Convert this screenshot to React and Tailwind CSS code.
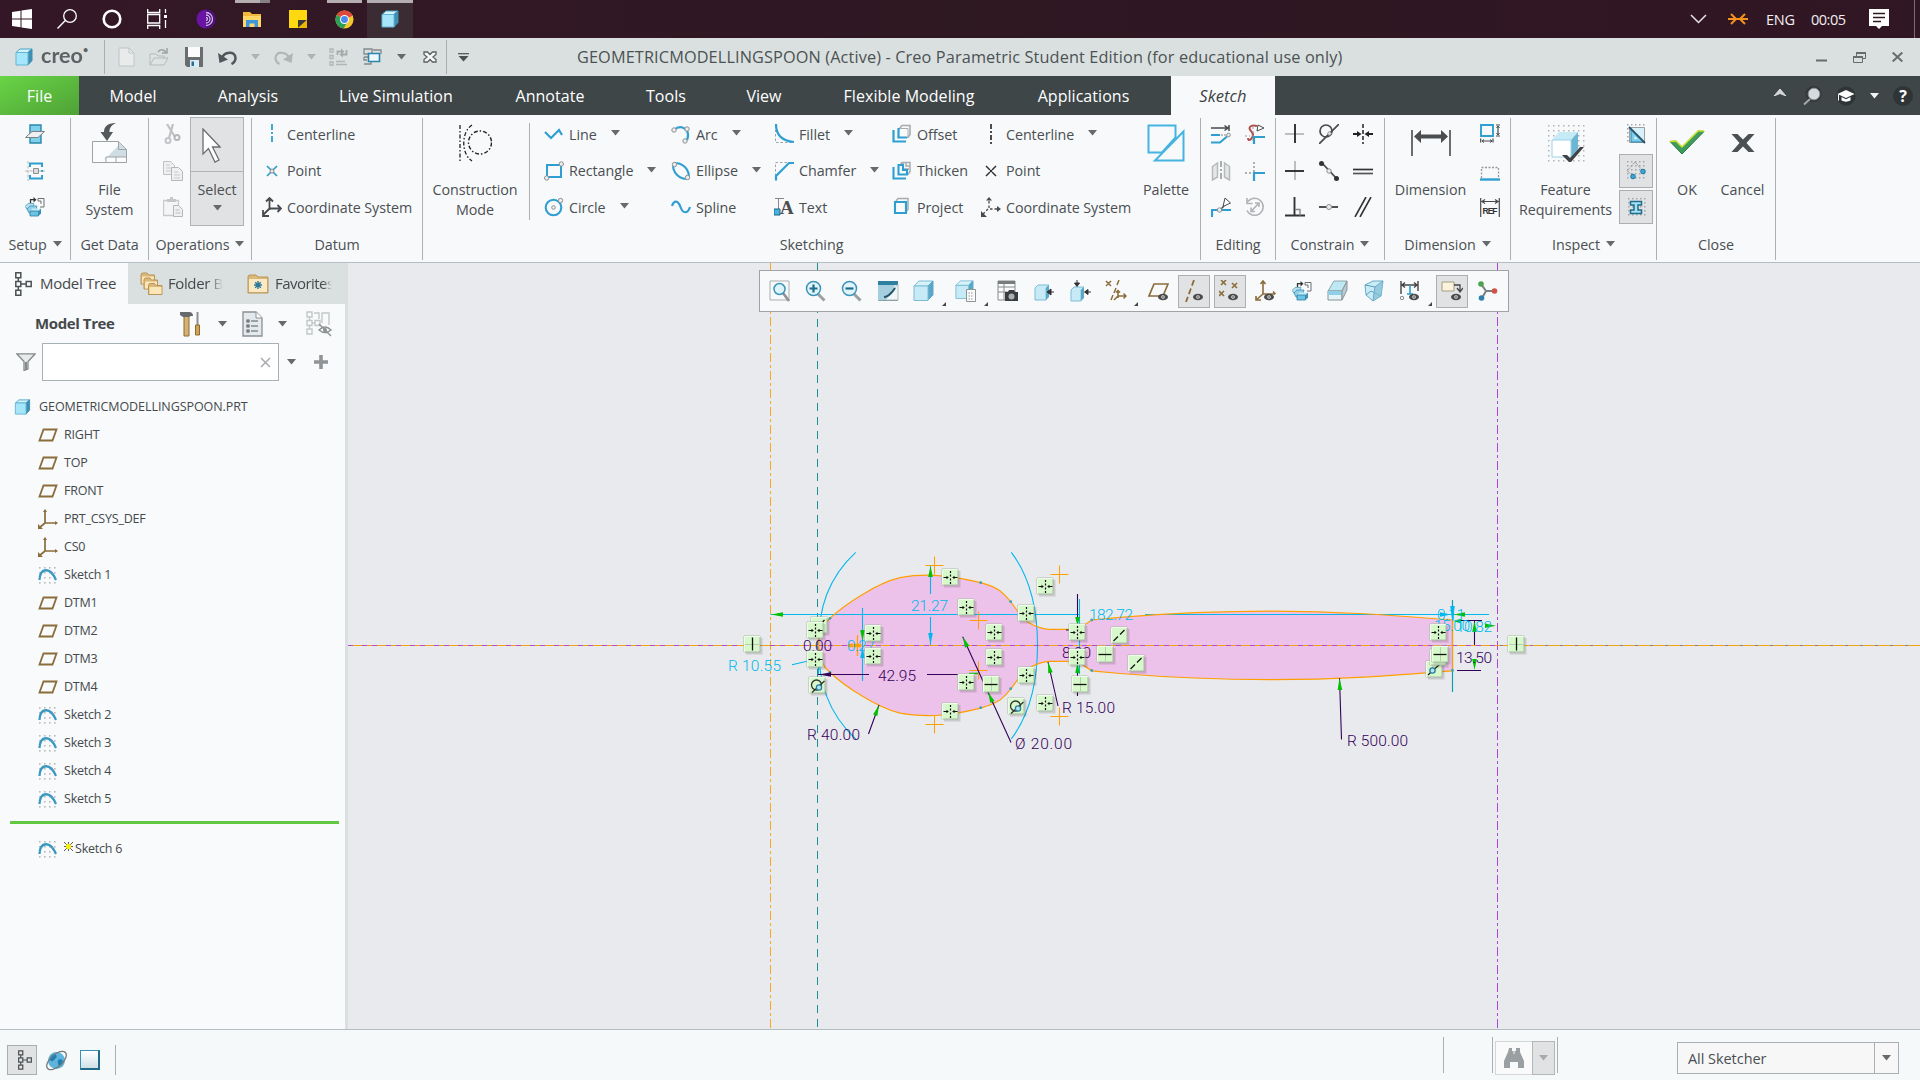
import React from "react";

const B = "#2e9fd0";
const D = "#474b4d";
const BR = "#8a6d3b";

/* ---------- shared primitives ---------- */

function Svg({ w = 20, h = 20, vb, className = "", children }) {
  return (
    <svg width={w} height={h} viewBox={vb || `0 0 ${w} ${h}`} fill="none" className={"block shrink-0 " + className}>
      {children}
    </svg>
  );
}

function Arrow({ className = "", color = "#666a6c" }) {
  return (
    <Svg w={9} h={6} className={className}>
      <path d="M0 0h9L4.5 5.5z" fill={color} />
    </Svg>
  );
}

function Cube({ w = 18, h = 18, className = "" }) {
  return (
    <Svg w={w} h={h} vb="0 0 18 18" className={className}>
      <path d="M1 4.5L5 1h12l-4 3.500z" fill="#d5f3fb" stroke="#4aa3c4" />
      <path d="M13 4.500L17 1v11.500L13 17z" fill="#3f8fb4" stroke="#3c8db0" />
      <path d="M1 4.500h12V17H1z" fill="#a6e6fa" stroke="#62b5d3" />
    </Svg>
  );
}

const Dots = ({ n = 5, s = 4, x = 1, y = 1, c = "#a3a7a9", r = 1.5 }) => (
  <g fill={c}>
    {Array.from({ length: n * n }, (_, i) => (
      <rect key={i} x={x + (i % n) * s} y={y + Math.floor(i / n) * s} width={r} height={r} />
    ))}
  </g>
);

const Knob = ({ x, y, r = 2.2 }) => <circle cx={x} cy={y} r={r} fill="#eee" stroke="#8b8f91" />;

const Eye = ({ x = 14, y = 15 }) => (
  <g>
    <ellipse cx={x} cy={y} rx="5" ry="3.300" fill="#4a4a4a" />
    <circle cx={x} cy={y} r="1.800" fill="#e8e8e8" />
    <circle cx={x} cy={y} r="0.800" fill="#222" />
  </g>
);

/* ---------- taskbar ---------- */

function TaskSlot({ children, className = "", line }) {
  return (
    <div className={"flex h-[38px] w-[46px] flex-col items-center " + className}>
      <div className={"h-[3px] " + (line || "w-0")} />
      <div className="flex h-[32px] items-center">{children}</div>
    </div>
  );
}

function Taskbar() {
  return (
    <div className="flex h-[38px] w-full items-center bg-linear-to-r from-[#341726] via-[#2e1822] to-[#311623] text-[#f3eef0]">
      <div className="flex w-[183px]">
        <div className="flex w-[44px] justify-center">
          <Svg>
            <path d="M0 3l8.500-1.200V9.500H0zM9.500 1.600L20 0v9.500H9.500zM0 10.500h8.500v7.700L0 17zM9.500 10.500H20V20L9.500 18.400z" fill="#fff" />
          </Svg>
        </div>
        <div className="flex w-[45px] justify-center">
          <Svg>
            <circle cx="13" cy="7" r="6.300" stroke="#fff" strokeWidth="1.300" />
            <path d="M8.300 11.500L0.500 19.500" stroke="#fff" strokeWidth="1.400" />
          </Svg>
        </div>
        <div className="flex w-[45px] justify-center">
          <Svg>
            <circle cx="10" cy="10" r="8.300" stroke="#fff" strokeWidth="2.600" />
          </Svg>
        </div>
        <div className="flex w-[45px] justify-center">
          <Svg>
            <path d="M.7 0v3.500h12V0M.7 20v-3.500h12V20M.7 5.500h12v8.500H.7zM18.500 0v4M18.500 11v8" stroke="#fff" strokeWidth="1.300" />
            <path d="M17 6h3v3h-3z" fill="#fff" />
          </Svg>
        </div>
      </div>
      <TaskSlot>
        <Svg>
          <circle cx="10" cy="10" r="9.500" fill="#6a14a5" />
          <path d="M10 1a9 9 0 010 18z" fill="#4b0d7a" />
          <path d="M10 3.500a6.500 6.500 0 010 13M10 6a4 4 0 010 8M10 8.500a1.500 1.500 0 010 3" stroke="#d9bdf0" strokeWidth="1.300" />
        </Svg>
      </TaskSlot>
      <TaskSlot line="w-[35px] border-r-[10px] border-[#868082] bg-[#b5aeb1]">
        <Svg w={18} h={17}>
          <path d="M0 1h7l2 2h9v13H0z" fill="#f0b73b" />
          <path d="M0 5h18v11H0z" fill="#ffd768" />
          <path d="M3 16V9h12v7h-3.500v-3.500h-5V16z" fill="#3c97dc" />
        </Svg>
      </TaskSlot>
      <TaskSlot>
        <Svg w={18} h={18}>
          <path d="M0 0h18v18H0z" fill="#ffd90f" />
          <path d="M9 18v-8h9z" fill="#3a3a3a" />
          <path d="M9 18l9-8v8z" fill="#eeb509" />
        </Svg>
      </TaskSlot>
      <TaskSlot line="w-[35px] bg-[#b5aeb1]">
        <Svg w={19} h={19} vb="0 0 20 20">
          <circle cx="10" cy="10" r="9.500" fill="#f6c62d" />
          <path d="M10 10L1.800 5.200A9.500 9.500 0 0118.500 6z" fill="#dc4a3d" />
          <path d="M10 10L1.800 5.200a9.500 9.500 0 007.200 14.300l3.500-6z" fill="#2f9e57" />
          <circle cx="10" cy="10" r="4.700" fill="#fff" />
          <circle cx="10" cy="10" r="3.600" fill="#4a87ee" />
        </Svg>
      </TaskSlot>
      <TaskSlot className="bg-[#3a2c32]" line="w-[46px] bg-[#b5aeb1]">
        <Cube />
      </TaskSlot>
      <div className="flex-1" />
      <Svg w={17} h={10}>
        <path d="M1 1l7.500 7.500L16 1" stroke="#e8e4e6" strokeWidth="1.500" />
      </Svg>
      <Svg w={20} h={14} className="ml-[21px]">
        <path d="M0 7h7M3 2l5 5-5 5M20 7h-7M17 2l-5 5 5 5M8 7h4" stroke="#f4921e" strokeWidth="2" />
      </Svg>
      <span className="ml-[18px] w-[45px] pt-px text-[14.500px] tracking-[-0.2px]">ENG</span>
      <span className="w-[58px] pt-px text-[14.500px] tracking-[-0.5px]">00:05</span>
      <Svg w={20} h={20}>
        <path d="M0 0h20v17h-7l-3 3-3-3H0z" fill="#fff" />
        <path d="M4 4.500h12M4 8.500h12M4 12.500h8" stroke="#2e1822" strokeWidth="1.300" />
      </Svg>
      <div className="ml-[25px] h-[38px] w-[6px] border-l border-[#7a6a72]" />
    </div>
  );
}

/* ---------- title bar ---------- */

function TitleBar() {
  return (
    <div className="flex h-[38px] w-full items-center bg-[#dae0df] text-[#4b5254]">
      <Cube className="ml-[15px]" />
      <div className="ml-2 flex w-[63px] pb-[3px] font-['Lato'] text-[20.500px] leading-none font-bold text-[#5d6265]">
        <span className="inline-block origin-left scale-x-[1.05]">creo</span>
        <span className="ml-[2px] text-[9px]">•</span>
      </div>
      <div className="h-[34px] w-px bg-[#a9afb0]" />
      <div className="flex w-[341px] items-center">
        <Svg w={17} h={20} className="ml-[13px]">
          <path d="M1 1h10l5 5v13H1z" fill="#e9ebeb" stroke="#bfc4c5" />
          <path d="M11 1v5h5" stroke="#bfc4c5" />
        </Svg>
        <Svg w={20} h={20} className="ml-[14px]">
          <path d="M1 18V7h6l2 2h6v3M1 18l4-7h14l-4 7z" fill="#dfe2e2" stroke="#b5babb" />
          <path d="M9 5c2-3 5-3 8 0M18 1v5h-5" stroke="#9ca2a3" strokeWidth="1.500" />
        </Svg>
        <Svg w={18} h={20} className="ml-[16px]">
          <path d="M0 0h18v20H2l-2-2z" fill="#696d70" />
          <path d="M3 0h12v10H3z" fill="#fbfbfb" />
          <path d="M5 13h9v7H5z" fill="#d9ecf5" />
          <path d="M6.500 14.500h2.500v4.500H6.500z" fill="#2b6d8e" />
        </Svg>
        <Svg w={19} h={15} className="ml-[15px]">
          <path d="M4 8c2-6 13-8 13.500 0 0 3-2 5-4 6" stroke="#51565a" strokeWidth="2.500" />
          <path d="M0 3l1.500 10L10 9.500z" fill="#51565a" />
        </Svg>
        <Arrow className="ml-[14px]" color="#adb3b3" />
        <Svg w={19} h={15} className="ml-[14px]">
          <path d="M15 8C13 2 2 0 1.500 8c0 3 2 5 4 6" stroke="#b0b6b6" strokeWidth="2.200" />
          <path d="M19 3l-1.500 10L9 9.500z" fill="#b0b6b6" />
        </Svg>
        <Arrow className="ml-[14px]" color="#adb3b3" />
        <Svg w={19} h={20} className="ml-[13px]">
          <path d="M1 2h3v3H1zM1 8.500h3v3H1zM1 15h3v3H1zM7 14.500h9M7 17.500h11" stroke="#b0b5b6" strokeWidth="1.300" />
          <path d="M8.500 8V4.500h4M17.500 3v4.500h-4" stroke="#a5abab" strokeWidth="1.800" />
          <path d="M12 1.500l3.500 3-3.500 3zM14 4.500v6l-3.500-3z" fill="#a5abab" />
        </Svg>
        <Svg w={19} h={18} className="ml-[15px]">
          <path d="M1 1h8v5H1zM10 2h8v4M1 9h4M1 16h7v-3M1 9v3h3" stroke="#84898b" strokeWidth="1.300" />
          <path d="M5.500 5.500h11v8h-11z" fill="#eef7fb" stroke="#2b86ab" strokeWidth="1.600" />
        </Svg>
        <Arrow className="ml-[15px]" />
        <Svg w={14} h={12} className="ml-[17px]">
          <path d="M1 1h3.500L7 3.500 9.500 1H13v2.500L10 6l3 2.500V11H9.500L7 8.500 4.500 11H1V8.500L4 6 1 3.500z" fill="#f7f8f8" stroke="#5b6062" strokeWidth="1.300" />
        </Svg>
      </div>
      <div className="h-[34px] w-px bg-[#a9afb0]" />
      <Svg w={11} h={9} className="ml-[11px]">
        <path d="M0 .7h11" stroke="#4b5053" strokeWidth="1.200" />
        <path d="M.5 3h10L5.500 8.500z" fill="#4b5053" />
      </Svg>
      <span className="ml-[108px] w-[780px] text-[16.300px] tracking-[0.120px] whitespace-nowrap">
        GEOMETRICMODELLINGSPOON (Active) - Creo Parametric Student Edition (for educational use only)
      </span>
      <div className="flex-1" />
      <Svg w={11} h={10}>
        <path d="M0 8.500h11" stroke="#666c6e" strokeWidth="2" />
      </Svg>
      <Svg w={13} h={11} className="ml-[26px]">
        <path d="M.5 4.500h9v6h-9zM3.500 4V.5h9v6H10" stroke="#666c6e" />
        <path d="M0 5h10M3 1h10" stroke="#666c6e" strokeWidth="2" />
      </Svg>
      <Svg w={11} h={10} className="mr-[17px] ml-[26px]">
        <path d="M.7.5l9.600 9M10.300.5l-9.600 9" stroke="#666c6e" strokeWidth="2" />
      </Svg>
    </div>
  );
}

/* ---------- ribbon tabs ---------- */

const TABS = [
  ["Model", "w-[108px]"],
  ["Analysis", "w-[122px]"],
  ["Live Simulation", "w-[174px]"],
  ["Annotate", "w-[134px]"],
  ["Tools", "w-[98px]"],
  ["View", "w-[98px]"],
  ["Flexible Modeling", "w-[192px]"],
  ["Applications", "w-[157px]"],
];

function Tabs() {
  return (
    <div className="flex h-[39px] w-full items-center bg-[#3e4647] text-[16px] tracking-[0.050px] text-white">
      <div className="flex h-full w-[79px] items-center justify-center bg-linear-to-br from-[#68d546] to-[#4fa236]">File</div>
      {TABS.map(([t, w]) => (
        <div key={t} className={"text-center whitespace-nowrap " + w}>
          {t}
        </div>
      ))}
      <div className="ml-[9px] flex h-full w-[104px] items-center justify-center bg-[#f8f9fb] pt-px text-[16.500px] text-[#3c4244] italic">Sketch</div>
      <div className="flex-1" />
      <Svg w={14} h={8} className="mb-2">
        <path d="M1 8l6-7 6 7-6-2.500z" fill="#d5d8d8" stroke="#d5d8d8" />
      </Svg>
      <Svg w={19} h={20} className="ml-[16px]">
        <circle cx="10.500" cy="8" r="8" fill="#33393a" />
        <circle cx="11" cy="8" r="5.800" fill="#d3dbdf" stroke="#8d9597" />
        <path d="M7 13l-6 5.500" stroke="#a5abab" strokeWidth="1.800" />
      </Svg>
      <Svg w={20} h={20} className="ml-[14px]">
        <circle cx="10" cy="10" r="9.500" fill="#2f3536" />
        <path d="M1.500 8l8.500-4 8.500 4-8.500 4z" fill="#fff" />
        <path d="M5.500 11v3.500c3 1.500 6 1.500 9 0V11L10 13.200z" fill="#fff" />
        <path d="M2.500 8.500v6" stroke="#fff" />
      </Svg>
      <Arrow className="ml-[14px]" color="#f2f4f4" />
      <div className="mr-[7px] ml-[14px] flex h-5 w-5 items-center justify-center rounded-full bg-[#2f3536] text-[16px] font-bold">?</div>
    </div>
  );
}

/* ---------- ribbon ---------- */

function Group({ w, label, arrow, children }) {
  return (
    <div className={"flex h-full flex-col " + w}>
      <div className="mt-[3px] flex h-[142px] flex-col border-r border-[#abb0b2]">
        <div className="flex h-[111px]">{children}</div>
        <div className="flex h-[31px] items-center justify-center pt-px">
          {label}
          {arrow && <Arrow className="mb-[3px] ml-[6px]" />}
        </div>
      </div>
    </div>
  );
}

function Col({ className = "", children }) {
  return (
    <div className={"-mt-[2px] flex flex-col " + className}>
      {React.Children.map(children, (c) => (
        <div className="flex h-[36.500px] items-center">{c}</div>
      ))}
    </div>
  );
}

function Item({ icon, label, arrow }) {
  return (
    <div className="flex items-center whitespace-nowrap">
      {icon}
      <span className="ml-[5px]">{label}</span>
      {arrow && <Arrow className="mb-[2px] ml-[14px]" />}
    </div>
  );
}

function Big({ icon, label, label2, className = "" }) {
  return (
    <div className={"flex flex-col items-center " + className}>
      <div className="flex h-[54px] items-center pb-[4px]">{icon}</div>
      <div className="mt-[8px] leading-[20px] whitespace-nowrap">{label}</div>
      {label2 && <div className="leading-[20px] whitespace-nowrap">{label2}</div>}
    </div>
  );
}

const ic = {
  setup1: (
    <Svg>
      <path d="M5 1h11v18H5z" fill="#7fd0ea" stroke="#2b86ab" strokeWidth="1.400" />
      <path d="M7 7.500h12.500L13 13.500H.5z" fill="#eef0f1" stroke="#7c8183" />
    </Svg>
  ),
  setup2: (
    <Svg>
      <path d="M5 6V2.500h12V6M5 14v3.500h12V14M17 9v2" stroke={B} strokeWidth="2" />
      <path d="M0 10h20M3 0v20" stroke="#b4b8b9" strokeDasharray="3 1.500" />
      <path d="M8.500 7.500h5v5h-5z" fill="#ddd" stroke="#8b8f91" />
    </Svg>
  ),
  setup3: (
    <Svg>
      <path d="M0 9.500l3-3h6l-2 7H3z" fill="#b5dfef" stroke="#5b9fbd" strokeWidth="0.800" />
      <path d="M2 12l3-3h7l-2 7H4z" fill="#8fd0e8" stroke="#3f8fb2" strokeWidth="0.800" />
      <path d="M5 14l2.500-2.500H16L13.500 14z" fill="#c3ebf7" />
      <path d="M13.500 14l2.500-2.500v5L13.500 19z" fill="#3f8fb2" />
      <path d="M5 14h8.500v5H5z" fill="#6cc3e3" stroke="#2b7ea3" strokeWidth="0.800" />
      <path d="M5.500 6V2.700H10" stroke="#333" strokeWidth="1.300" />
      <path d="M8.500 0l3 2.700-3 2.700z" fill="#333" />
      <path d="M13 1.500h6v8.500h-4M13 1.500V4h3v3" stroke="#6b6f72" />
    </Svg>
  ),
  file: (
    <Svg w={35} h={40}>
      <path d="M.5 18.500h26l8 8v13H.5z" fill="#fbfcfd" stroke="#9ea3a5" />
      <path d="M10 39L27 22v-3l7 8v7H14z" fill="#cfdde5" />
      <path d="M26.500 18.500v8h8M14 39v-5h20M24 34v5" stroke="#9ea3a5" />
      <path d="M24 0C15 0 12 4 12 9H8.500l6.500 9 6-9h-3.500c0-4 1-6 6.500-9z" fill="#53585a" />
    </Svg>
  ),
  cut: (
    <Svg w={18} h={20}>
      <path d="M4 0l8 13M10 0l-4 14" stroke="#bfc2c4" strokeWidth="2.200" />
      <circle cx="5" cy="16.500" r="2.500" stroke="#c2c5c7" strokeWidth="2" />
      <circle cx="14" cy="13.500" r="2.500" stroke="#b5b8ba" strokeWidth="2" />
    </Svg>
  ),
  copy: (
    <Svg>
      <path d="M.5.5h7l4 4v9H.5z" fill="#eff0f1" stroke="#bfc2c4" />
      <path d="M8.500 6.500h7l4 4v9h-11z" fill="#eff0f1" stroke="#b5b8ba" />
      <path d="M3 4h4M3 7h5M3 10h5M11 11h4M11 14h6M11 17h6" stroke="#c7cacb" />
    </Svg>
  ),
  paste: (
    <Svg>
      <path d="M.5 3.500h15v15H.5z" fill="#f4f5f6" stroke="#c7cacb" strokeWidth="1.300" />
      <path d="M4 2h3V0h3v2h3v3H4z" fill="#c5c8ca" />
      <path d="M10.500 8.500h5l4 4v7h-9z" fill="#eff0f1" stroke="#b5b8ba" />
      <path d="M12.500 13h4M12.500 16h5" stroke="#bbb" />
    </Svg>
  ),
  cursor: (
    <Svg w={19} h={36}>
      <path d="M1 1v25l5.500-5.500L13 34l4-2-6.500-13H18z" fill="#fff" stroke="#6a6e70" strokeWidth="1.300" />
    </Svg>
  ),
  clBlue: (
    <Svg>
      <path d="M10 0v20" stroke={B} strokeWidth="1.800" strokeDasharray="6 2 2 2" />
    </Svg>
  ),
  ptBlue: (
    <Svg>
      <path d="M5 5l10 10M15 5L5 15" stroke={B} strokeWidth="1.700" />
      <circle cx="10" cy="10" r="2" fill="#e8e8e8" stroke="#888" />
    </Svg>
  ),
  csDark: (
    <Svg>
      <path d="M7.500 13V2M4 4.500L7.500 1 11 4.500M7.500 11.500H18M15.500 8l3.500 3.500-3.500 3.500M7.500 11.500l-6 6M1 13v6h6" stroke={D} strokeWidth="1.800" />
    </Svg>
  ),
  constr: (
    <Svg w={34} h={38}>
      <path d="M2 1v36" stroke="#222" strokeWidth="1.300" strokeDasharray="4 2 1.500 2" />
      <path d="M14 1C3 8 3 30 14 37" stroke="#222" strokeWidth="1.300" strokeDasharray="4 2 1.500 2" />
      <circle cx="22" cy="18.500" r="11.500" stroke="#222" strokeWidth="1.400" strokeDasharray="4 2 1.500 2" />
    </Svg>
  ),
  line: (
    <Svg>
      <path d="M1 8l6 6 8-8 3 5" stroke={B} strokeWidth="2.200" />
    </Svg>
  ),
  rect: (
    <Svg>
      <path d="M3 4h14v12H3z" stroke={B} strokeWidth="2" />
      <Knob x={17.300} y={3} />
      <Knob x={2.700} y={17} />
    </Svg>
  ),
  circle: (
    <Svg>
      <circle cx="9.500" cy="10.500" r="7.800" stroke={B} strokeWidth="2.100" />
      <Knob x={9.500} y={10.500} r={1.800} />
      <Knob x={16.500} y={3.500} />
    </Svg>
  ),
  arc: (
    <Svg>
      <path d="M3 6C10 0 20 5 16 16" stroke={B} strokeWidth="2.200" />
      <Knob x={3} y={6} />
      <Knob x={16} y={5} />
      <Knob x={14} y={17} />
    </Svg>
  ),
  ellipse: (
    <Svg>
      <ellipse cx="10" cy="10" rx="9.500" ry="5.500" transform="rotate(45 10 10)" stroke={B} strokeWidth="2.100" />
      <Knob x={3.500} y={3.500} />
      <Knob x={16.500} y={16.500} />
    </Svg>
  ),
  spline: (
    <Svg>
      <path d="M1 9c2-6 6-6 8.500 1s7 7 9.500 0" stroke={B} strokeWidth="2.200" />
    </Svg>
  ),
  fillet: (
    <Svg>
      <path d="M1.500 1v17.500H19" stroke="#a0a4a6" strokeDasharray="2.500 2" />
      <path d="M2 0c0 11 6 17 18 18" stroke={B} strokeWidth="2.200" />
    </Svg>
  ),
  chamfer: (
    <Svg>
      <path d="M1.500 15V1.500H15" stroke="#a0a4a6" strokeDasharray="2.500 2" />
      <path d="M2 19.500V15L15 2h5" stroke={B} strokeWidth="2.200" />
    </Svg>
  ),
  text: (
    <Svg>
      <path d="M1 1.500h9M4.500 1v12" stroke="#85898b" />
      <path d="M0 12h6v6H0z" fill="#45b4e0" stroke="#1c6584" />
      <text x="6" y="16.500" fontFamily="Liberation Serif, serif" fontWeight="bold" fontSize="19" fill="#4b4f51">A</text>
    </Svg>
  ),
  offset: (
    <Svg>
      <path d="M7.500 4.500L10 1.500h8v9l-2 3" stroke="#a8acae" strokeWidth="1.600" />
      <path d="M7 4.500h9v9H6z" stroke="#a8acae" />
      <path d="M1.500 6v11.500H14M6.500 4v9.500H15" stroke={B} strokeWidth="2.200" />
    </Svg>
  ),
  thicken: (
    <Svg>
      <path d="M7.500 4.500L10 1.500h8v9l-2 3M11 2v6h6M14 2v3h4" stroke="#a8acae" strokeWidth="1.500" />
      <path d="M1.500 6v11.500H14M6.500 4v9.500H15V9h-4V4z" stroke={B} strokeWidth="2.100" />
    </Svg>
  ),
  project: (
    <Svg>
      <path d="M4 4l2-2.500h10V12l-2 3" stroke="#a8acae" strokeWidth="1.500" />
      <path d="M3 5h11v11H3z" stroke={B} strokeWidth="2.100" />
    </Svg>
  ),
  clDark: (
    <Svg>
      <path d="M10 0v20" stroke="#222" strokeWidth="1.600" strokeDasharray="5 2 2 2" />
    </Svg>
  ),
  ptDark: (
    <Svg>
      <path d="M5 5l4 4M11 11l4 4M15 5l-4 4M9 11l-4 4" stroke="#333" strokeWidth="1.500" />
      <path d="M9 9h2v2H9z" fill="#333" />
    </Svg>
  ),
  csDash: (
    <Svg>
      <path d="M8 4v8h9M7 12l-5 5" stroke={D} strokeWidth="1.300" strokeDasharray="2.500 2" />
      <path d="M5 3.500L8 0l3 3.500zM16 9l4 3-4 3zM0 14v6h6z" fill={D} />
    </Svg>
  ),
  palette: (
    <Svg w={38} h={38}>
      <path d="M1.500 1.500h27v12L15 28.500H1.500z" stroke="#45b4e0" strokeWidth="2" />
      <path d="M36.500 7.500v29H8z" fill="#f8f9fb" stroke="#45b4e0" strokeWidth="2" />
    </Svg>
  ),
  modify: (
    <Svg>
      <path d="M0 4h17M18 1v6M13.500 1.500L17 4l-3.500 2.500" stroke={D} strokeWidth="1.500" />
      <path d="M0 11h9M0 18.500h9l7-6" stroke={B} strokeWidth="2" />
      <path d="M10 11h6" stroke="#888" strokeDasharray="2 1" />
      <Knob x={17.500} y={11} r={1.800} />
    </Svg>
  ),
  delseg: (
    <Svg>
      <path d="M12 2C5 0 3 4 6 7s2 6 0 8-3 1-3-1" stroke="#b0544b" strokeWidth="2" />
      <path d="M0 12h5M8 3v14" stroke="#999" strokeDasharray="2 2" />
      <path d="M9 20v-7h11" stroke={B} strokeWidth="2.200" />
      <path d="M13 1l6 3-7 3z" fill="#fff" stroke={D} />
    </Svg>
  ),
  mirror: (
    <Svg>
      <path d="M10 0v20" stroke="#8f9395" strokeWidth="1.500" strokeDasharray="6 2 2 2" />
      <path d="M1.500 5.500l5-3.500v14l-5 3zM18.500 5.500l-5-3.500v14l5 3z" fill="#e4e6e7" stroke="#b7babc" strokeWidth="1.500" />
    </Svg>
  ),
  corner: (
    <Svg>
      <path d="M9 1v10M0 12h8" stroke="#999" strokeWidth="1.500" strokeDasharray="2 2" />
      <path d="M9 20v-8h11" stroke={B} strokeWidth="2.200" />
    </Svg>
  ),
  divide: (
    <Svg>
      <path d="M1 20v-7h6M11 13h9" stroke={B} strokeWidth="2.200" />
      <path d="M12 9.500L14 1l5.500 5z" fill="#fff" stroke={D} />
      <path d="M13 9l-3 3" stroke={D} strokeWidth="1.500" />
      <Knob x={8.500} y={13} />
    </Svg>
  ),
  rotate: (
    <Svg>
      <path d="M3 4.500a8.500 8.500 0 11-1 9M2 1v5.500h5.500M6.500 14l7-7.500M10 6h4v4M6 10.500v4h4" stroke="#b0b3b5" strokeWidth="1.600" />
    </Svg>
  ),
  c1: <Svg><path d="M0 10h19" stroke="#a7abad" strokeWidth="1.500" /><path d="M10 0v19" stroke="#222" strokeWidth="1.800" /></Svg>,
  c2: <Svg><circle cx="7" cy="7" r="6" stroke={D} strokeWidth="1.700" /><path d="M0 20L20 0" stroke={D} strokeWidth="1.700" /><Knob x={10.500} y={9.500} r={1.700} /></Svg>,
  c3: (
    <Svg>
      <path d="M10 0v20" stroke="#222" strokeWidth="1.500" strokeDasharray="4 2" />
      <path d="M0 10h5M20 10h-5" stroke="#222" strokeWidth="1.800" />
      <path d="M4 7l4.500 3L4 13zM16 7l-4.500 3 4.500 3z" fill="#222" />
    </Svg>
  ),
  c4: <Svg><path d="M10 0v19" stroke="#a7abad" strokeWidth="1.500" /><path d="M0 10h19" stroke="#222" strokeWidth="1.800" /></Svg>,
  c5: (
    <Svg>
      <path d="M3 2l15 16" stroke={D} strokeWidth="1.800" />
      <circle cx="2.500" cy="2.500" r="2.500" fill="#333" />
      <circle cx="17.500" cy="17.500" r="2.500" fill="#333" />
      <Knob x={10} y={10} />
    </Svg>
  ),
  c6: <Svg><path d="M0 8.500h20" stroke="#333" strokeWidth="1.700" /><path d="M0 12.500h20" stroke="#555" strokeWidth="1.700" /></Svg>,
  c7: <Svg><path d="M9.500 0v18M0 18.500h20" stroke="#333" strokeWidth="1.900" /><path d="M10 12.500h5v6" stroke="#888" strokeWidth="1.400" /></Svg>,
  c8: <Svg><path d="M0 10h19" stroke="#333" strokeWidth="1.700" /><Knob x={10} y={10} r={2.500} /></Svg>,
  c9: <Svg><path d="M2 20L13 0M7 20L18 0" stroke="#333" strokeWidth="1.600" /></Svg>,
  dim: (
    <Svg w={40} h={26}>
      <path d="M1 0v26M39 0v26" stroke="#333" strokeWidth="1.400" />
      <path d="M8 6.500h24" stroke="#4a4e50" strokeWidth="4" />
      <path d="M3 6.500L10 0v13zM37 6.500L30 0v13z" fill="#4a4e50" />
    </Svg>
  ),
  dim1: (
    <Svg>
      <path d="M1 1h12v11H1z" stroke={B} strokeWidth="1.900" />
      <path d="M16 1h4M16 12h4M18 2v9M.7 14.500v4M13 14.500v4M2 17h10" stroke={D} strokeWidth="1.200" />
      <path d="M16.500 4L18 2l1.500 2M16.500 9l1.500 2 1.500-2M4 15.500L2 17l2 1.500M10 15.500l2 1.500-2 1.500" stroke={D} />
    </Svg>
  ),
  dim2: (
    <Svg>
      <path d="M1.500 17V6.500h17V17" stroke="#999" strokeWidth="1.300" strokeDasharray="2 1.500" />
      <path d="M0 18.500h20" stroke={B} strokeWidth="2.400" />
    </Svg>
  ),
  dim3: (
    <Svg>
      <path d="M.7 1v19M19.300 1v19M2 4.500h16M5 2.500L2 4.500l3 2M15 2.500l3 2-3 2" stroke={D} strokeWidth="1.200" />
      <text x="2.500" y="17" fontFamily="Liberation Sans, sans-serif" fontWeight="bold" fontSize="8.500" textLength="15" fill="#333">REF</text>
    </Svg>
  ),
  feature: (
    <Svg w={38} h={38}>
      <Dots n={8} s={5} x={1} y={1} c="#b0b4b6" />
      <path d="M5 16l7-8h19l-7 8z" fill="#c5ebf7" />
      <path d="M24 16l7-8v17l-7 8z" fill="#6cb6d4" />
      <path d="M5 16h19v17H5z" fill="#fff" stroke="#9bd2e6" />
      <path d="M15 31h5l3 3L33 23h4L24 38h-2z" fill="#404446" />
    </Svg>
  ),
  in1: (
    <Svg>
      <Dots n={5} s={4} x={1} y={0} />
      <path d="M3.500 3.500h15v15h-15z" fill="#d7f0f9" stroke="#9aa0a2" />
      <path d="M5 5v13h13z" fill="#7ccdea" stroke="#2b86ab" />
      <path d="M8.500 12v3h3z" fill="#f8f9fb" />
      <path d="M3 3l16 16" stroke="#29546b" strokeWidth="1.800" />
    </Svg>
  ),
  in2: (
    <Svg>
      <Dots n={5} s={4} x={1} y={0} />
      <path d="M7 14L1 10l8-9 8 9" stroke="#9a9ea0" strokeDasharray="3 1" />
      <circle cx="7" cy="15.500" r="2.300" fill="#3aa7d6" stroke="#1f79a1" />
      <circle cx="17" cy="10.500" r="2.300" fill="#3aa7d6" stroke="#1f79a1" />
    </Svg>
  ),
  in3: (
    <Svg>
      <Dots n={5} s={4} x={2} y={1} />
      <path d="M4.500 4.500h11v3.500H12v5h3.500v3.500h-11V13H8V8H4.500z" fill="#a6e2f5" stroke="#1f6c8b" strokeWidth="1.500" />
    </Svg>
  ),
  ok: (
    <Svg w={36} h={26}>
      <path d="M1 11.500l6-.500 6 6L29 1l6 .500L13 24z" fill="#3f9c5c" stroke="#257a3c" />
      <path d="M1 11.500l6-.500 6 6L29 1h6" stroke="#c8e02a" strokeWidth="1.500" />
    </Svg>
  ),
  cancel: (
    <Svg w={24} h={20}>
      <path d="M.5 1h6l5.500 5.500L17.500 1h6l-8 9 8 9h-6L12 13.500 6.500 19h-6l8-9z" fill="#4b5052" />
    </Svg>
  ),
};

function Ribbon() {
  return (
    <div className="flex h-[148px] w-full border-b border-[#b3bec2] bg-[#f8f9fb] text-[14.300px] tracking-[-0.060px] text-[#4a4f52]">
      <Group w="w-[71px]" label="Setup" arrow>
        <Col className="ml-[25px]">{[ic.setup1, ic.setup2, ic.setup3]}</Col>
      </Group>
      <Group w="w-[78px]" label="Get Data">
        <Big className="w-full" icon={ic.file} label="File" label2="System" />
      </Group>
      <Group w="w-[103px]" label="Operations" arrow>
        <Col className="ml-[14px] w-[27px]">{[ic.cut, ic.copy, ic.paste]}</Col>
        <div className="-mt-px flex h-[109px] w-[54px] flex-col items-center border border-[#b0b3b5] bg-[#e1e2e4]">
          <div className="flex h-[54px] w-full items-center justify-center border-b border-[#b0b3b5] pt-[2px] pr-[11px]">{ic.cursor}</div>
          <div className="mt-[8px] leading-[20px]">Select</div>
          <Arrow className="mt-[5px]" />
        </div>
      </Group>
      <Group w="w-[171px]" label="Datum">
        <Col className="ml-[10px]">
          <Item icon={ic.clBlue} label="Centerline" />
          <Item icon={ic.ptBlue} label="Point" />
          <Item icon={ic.csDark} label="Coordinate System" />
        </Col>
      </Group>
      <Group w="w-[778px]" label="Sketching">
        <Big className="w-[104px]" icon={ic.constr} label="Construction" label2="Mode" />
        <div className="mt-[5px] ml-[2px] h-[97px] w-px bg-[#abb0b2]" />
        <Col className="ml-[14px] w-[127px]">
          <Item icon={ic.line} label="Line" arrow />
          <Item icon={ic.rect} label="Rectangle" arrow />
          <Item icon={ic.circle} label="Circle" arrow />
        </Col>
        <Col className="w-[103px]">
          <Item icon={ic.arc} label="Arc" arrow />
          <Item icon={ic.ellipse} label="Ellipse" arrow />
          <Item icon={ic.spline} label="Spline" />
        </Col>
        <Col className="w-[118px]">
          <Item icon={ic.fillet} label="Fillet" arrow />
          <Item icon={ic.chamfer} label="Chamfer" arrow />
          <Item icon={ic.text} label="Text" />
        </Col>
        <Col className="w-[89px]">
          <Item icon={ic.offset} label="Offset" />
          <Item icon={ic.thicken} label="Thicken" />
          <Item icon={ic.project} label="Project" />
        </Col>
        <Col className="w-[152px]">
          <Item icon={ic.clDark} label="Centerline" arrow />
          <Item icon={ic.ptDark} label="Point" />
          <Item icon={ic.csDash} label="Coordinate System" />
        </Col>
        <Big className="w-[66px]" icon={ic.palette} label="Palette" />
      </Group>
      <Group w="w-[75px]" label="Editing">
        <Col className="ml-[10px] w-[34px]">{[ic.modify, ic.mirror, ic.divide]}</Col>
        <Col>{[ic.delseg, ic.corner, ic.rotate]}</Col>
      </Group>
      <Group w="w-[109px]" label="Constrain" arrow>
        <Col className="ml-[9px] w-[34px]">{[ic.c1, ic.c4, ic.c7]}</Col>
        <Col className="w-[34px]">{[ic.c2, ic.c5, ic.c8]}</Col>
        <Col>{[ic.c3, ic.c6, ic.c9]}</Col>
      </Group>
      <Group w="w-[126px]" label="Dimension" arrow>
        <Big className="w-[91px]" icon={ic.dim} label="Dimension" />
        <Col className="ml-[4px]">{[ic.dim1, ic.dim2, ic.dim3]}</Col>
      </Group>
      <Group w="w-[146px]" label="Inspect" arrow>
        <Big className="w-[109px]" icon={ic.feature} label="Feature" label2="Requirements" />
        <Col className="-ml-px">
          <div className="flex w-[34px] justify-center">{ic.in1}</div>
          <div className="flex h-[34px] w-[34px] items-center justify-center border border-[#abafb1] bg-[#e1e2e4]">{ic.in2}</div>
          <div className="flex h-[34px] w-[34px] items-center justify-center border border-[#abafb1] bg-[#e1e2e4]">{ic.in3}</div>
        </Col>
      </Group>
      <Group w="w-[119px]" label="Close">
        <Big className="w-[60px]" icon={ic.ok} label="OK" />
        <Big className="w-[51px]" icon={ic.cancel} label="Cancel" />
      </Group>
    </div>
  );
}

/* ---------- model tree ---------- */

const TreeGlyph = ({ w = 17, h = 24, c = "#4d5153" }) => (
  <Svg w={w} h={h} vb="0 0 17 24">
    <path d="M.8.800h5v5h-5zM.8 9.500h5v5h-5zM.8 18.200h5v5h-5zM11.200 9.500h5v5h-5zM3.300 6v3.500M3.300 14.500v3.500M6 12h5" stroke={c} strokeWidth="1.500" />
  </Svg>
);

const PlaneIcon = () => (
  <Svg w={20} h={14}>
    <path d="M5.500 1.500h13l-4 11h-13z" stroke={BR} strokeWidth="1.800" />
  </Svg>
);
const CsysIcon = () => (
  <Svg>
    <path d="M7 1v13h12M7 14l-6 5" stroke={BR} strokeWidth="1.700" />
    <path d="M5 3l2-3 2 3zM17 12l3 2-3 2zM0 15v5h5z" fill={BR} />
  </Svg>
);
const SketchIcon = () => (
  <Svg w={19} h={18}>
    <Dots n={4} s={5} x={1} y={1} c="#b8bcbe" r={1.600} />
    <path d="M1.500 14C2 2 12 0 18 14" stroke="#3a98c2" strokeWidth="2.300" />
  </Svg>
);

const TREE = [
  ["p", "RIGHT"],
  ["p", "TOP"],
  ["p", "FRONT"],
  ["c", "PRT_CSYS_DEF"],
  ["c", "CS0"],
  ["s", "Sketch 1"],
  ["p", "DTM1"],
  ["p", "DTM2"],
  ["p", "DTM3"],
  ["p", "DTM4"],
  ["s", "Sketch 2"],
  ["s", "Sketch 3"],
  ["s", "Sketch 4"],
  ["s", "Sketch 5"],
];

const Folder = ({ x, y }) => (
  <g>
    <path d={`M${x} ${y + 2}q0-2 2-2h4l1.500 2h6v9h-13.500z`} fill="#dcb878" stroke="#b8935a" />
    <path d={`M${x + 1} ${y + 3.500}h12v7h-12z`} fill="#fbe6b8" />
  </g>
);

function Sidebar() {
  return (
    <div className="flex w-[348px] flex-col border-r-[3px] border-[#dae0df] bg-[#f8fafb] text-[#45494c]">
      <div className="-mr-[3px] flex h-[41px] text-[15px] tracking-[-0.3px]">
        <div className="flex w-[128px] items-center pl-[15px]">
          <TreeGlyph />
          <span className="ml-[8px] whitespace-nowrap">Model Tree</span>
        </div>
        <div className="flex flex-1 items-center bg-[#dae0df] pl-[12px]">
          <Svg w={24} h={24}>
            <Folder x={1} y={1} />
            <Folder x={4} y={6} />
            <Folder x={8.500} y={11.500} />
          </Svg>
          <div className="ml-[4px] w-[55px] overflow-hidden mask-r-from-75% mask-r-to-100% tracking-[-0.400px] whitespace-nowrap">Folder B</div>
          <Svg w={22} h={20} className="ml-[24px]">
            <path d="M1 3q0-2 2-2h6l2 2h10v16H1z" fill="#dcb878" stroke="#b8935a" />
            <path d="M2 5h18v13H2z" fill="#fbe9c3" />
            <path d="M11 7v8M7 11h8M8.200 8.200l5.600 5.600M13.800 8.200l-5.600 5.600" stroke="#2b7a99" strokeWidth="1.400" />
          </Svg>
          <div className="ml-[6px] w-[57px] overflow-hidden mask-r-from-85% mask-r-to-100% tracking-[-0.550px] whitespace-nowrap">Favorites</div>
        </div>
      </div>
      <div className="flex h-[39px] items-center pl-[35px]">
        <span className="w-[145px] text-[15px] font-bold tracking-[-0.4px]">Model Tree</span>
        <Svg w={21} h={26}>
          <path d="M4 5h5v20H4z" fill="#d3b274" stroke="#8f6c30" />
          <path d="M0 1h9q4 0 4 4h-2L9 6H3L0 4z" fill="#666a6d" />
          <path d="M17.500 1v13" stroke="#8b9092" strokeWidth="2" />
          <path d="M15.500 14h4v10h-4z" fill="#d0a355" stroke="#8f6c30" />
        </Svg>
        <Arrow className="ml-[17px]" />
        <Svg w={21} h={26} className="ml-[15px]">
          <path d="M1 1h13l6 6v18H1z" fill="#e3e9ec" stroke="#8c9092" strokeWidth="1.300" />
          <path d="M14 1v6h6" fill="#fff" stroke="#8c9092" />
          <path d="M9 10h7M9 15h7M9 20h7M5 9h2v2H5zM5 14h2v2H5zM5 19h2v2H5z" stroke="#565b5d" strokeWidth="1.100" />
        </Svg>
        <Arrow className="ml-[15px]" />
        <Svg w={26} h={26} className="ml-[19px]">
          <path d="M1 1h5v5H1zM1 9.500h5v5H1zM1 18h5v5H1zM9 9.500h5v5H9zM3.500 6v3M3.500 14.500v3M6 12h3M8 2h5v6M16 12V2h7v12" stroke="#c3c7c8" strokeWidth="1.400" />
          <path d="M13 19q6-6 12 0-6 5-12 0zM13 13l12 12" stroke="#8c9092" strokeWidth="1.400" />
          <circle cx="19" cy="19" r="2" fill="#8c9092" />
        </Svg>
      </div>
      <div className="flex h-[38px] items-center pl-[16px]">
        <Svg w={20} h={18}>
          <path d="M.8.800h18.400L12 8.500V16l-4 1.500v-9z" fill="#e8ebec" stroke="#85898b" strokeWidth="1.300" />
          <path d="M10 9v8" stroke="#85898b" strokeWidth="2" />
        </Svg>
        <div className="ml-[6px] flex h-[38px] w-[237px] items-center justify-end border border-[#a5b1b4] bg-white pr-[7px]">
          <Svg w={11} h={11}>
            <path d="M1 1l9 9M10 1l-9 9" stroke="#a7abad" strokeWidth="1.500" />
          </Svg>
        </div>
        <Arrow className="ml-[8px]" />
        <Svg w={14} h={14} className="ml-[18px]">
          <path d="M7 0v14M0 7h14" stroke="#8f9496" strokeWidth="3.600" />
        </Svg>
      </div>
      <div className="mt-[12px] flex flex-col text-[12.500px] tracking-[-0.220px]">
        <div className="flex h-[28px] items-center pl-[14px]">
          <Cube w={17} h={16} />
          <span className="ml-[8px] tracking-[-0.070px]">GEOMETRICMODELLINGSPOON.PRT</span>
        </div>
        {TREE.map(([k, t]) => (
          <div key={t} className="flex h-[28px] items-center pl-[38px]">
            <div className="flex w-[26px] pb-px">{k === "p" ? <PlaneIcon /> : k === "c" ? <CsysIcon /> : <SketchIcon />}</div>
            <span>{t}</span>
          </div>
        ))}
        <div className="mt-[8px] ml-[10px] h-[3px] w-[329px] bg-[#62c741]" />
        <div className="mt-[11px] flex h-[28px] items-center pl-[38px]">
          <div className="w-[26px] pb-px">
            <SketchIcon />
          </div>
          <Svg w={9} h={9} className="mb-[5px]">
            <path d="M0 0l9 9M9 0L0 9M4.500 0v9M0 4.500h9" stroke="#555" />
            <circle cx="4.500" cy="4.500" r="2.700" fill="#f4ee12" />
          </Svg>
          <span className="ml-[2px]">Sketch 6</span>
        </div>
      </div>
    </div>
  );
}

/* ---------- graphics toolbar ---------- */

const Lens = ({ children }) => (
  <Svg w={22} h={22}>
    <path d="M12.500 13.500l7 7" stroke="#9ba0a2" strokeWidth="3" />
    <circle cx="8.500" cy="8.500" r="7" fill="#e2f5fb" stroke="#3a93b8" strokeWidth="1.500" />
    {children}
  </Svg>
);

const BoxIcon = ({ children, s = 1 }) => (
  <Svg w={22} h={22}>
    <g transform={`scale(${s})`}>
      <path d="M1 6l5-5h14l-5 5z" fill="#d6f2fa" stroke="#7dbcd4" />
      <path d="M15 6l5-5v14l-5 5z" fill="#5aa7c8" stroke="#5aa7c8" />
      <path d="M1 6h14v14.500H1z" fill="#c6ebf7" stroke="#7dbcd4" />
    </g>
    {children}
  </Svg>
);

const BAR = [
  { i: <Svg w={22} h={22}><path d="M1 1h19v19H1z" stroke="#a9aeb0" /><path d="M14 13l6 8" stroke="#8e9395" strokeWidth="2.600" /><circle cx="10.500" cy="9" r="5.500" fill="#def3fa" stroke="#3a93b8" strokeWidth="1.500" /></Svg> },
  { i: <Lens><path d="M8.500 4.500v8M4.500 8.500h8" stroke="#1f6c8b" strokeWidth="2.200" /></Lens> },
  { i: <Lens><path d="M4.500 8.500h8" stroke="#1f6c8b" strokeWidth="2.200" /></Lens> },
  { i: <Svg w={22} h={22}><path d="M1.500 1.500h19v19h-19z" fill="#f1f7f9" stroke="#8da0a8" /><path d="M1 1h20L8 20H1z" fill="#a5cfdf" /><path d="M1 1h20v4H1z" fill="#2f7fa1" /><path d="M8 20L21 4v16z" fill="#f1f7f9" stroke="#8da0a8" strokeWidth="0.700" /><path d="M7 17c4 0 7-3 11-9" stroke="#22556c" strokeWidth="2.200" /></Svg> },
  { i: <BoxIcon />, m: true },
  { i: <BoxIcon s={0.9}><path d="M11.500 9.500h9v12h-9z" fill="#fbfbfb" stroke="#8e9395" /><path d="M13.500 13h5M13.500 16h5M13.500 19h5" stroke="#8e9395" strokeDasharray="1.500 1" /></BoxIcon>, m: true },
  { i: <Svg w={22} h={22}><path d="M1 1h17v19H1zM1 7h17M1 12h17M7 1v19" fill="#fbfbfb" stroke="#858a8c" /><path d="M1 1h17v3H1z" fill="#777c7e" /><path d="M8 12h3l1-2h5l1 2h3v9H8z" fill="#3a3d3f" /><circle cx="14.500" cy="16.500" r="3" fill="#aab0b2" /></Svg> },
  { i: <Svg w={22} h={22}><path d="M2 8l3-3h11l-3 3v12H2z" fill="#c6ebf7" stroke="#7dbcd4" /><path d="M13 8l3-3v12l-3 3z" fill="#5aa7c8" /><path d="M21 12h-6M18 9l-4 3 4 3z" fill="#333" stroke="#333" /></Svg> },
  { i: <Svg w={22} h={22}><path d="M2 10l3-3h10l-3 3v11H2z" fill="#c6ebf7" stroke="#7dbcd4" /><path d="M12 10l3-3v11l-3 3z" fill="#5aa7c8" /><path d="M22 12h-6M19 9.500L15.500 12l3.500 2.500zM8 0v4M5.500 3L8 6.500 10.500 3z" fill="#333" stroke="#333" /></Svg> },
  { i: <Svg w={22} h={22}><path d="M1 1l5 5M6 1L1 6M14 0l-2 5M11 8l-2 5M8 15l-2 5M13 18v-7M13 16h8M13 16l-4 4M18.500 13.500L21 16l-2.500 2.500M11 12.500l2-2 2 2" stroke={BR} strokeWidth="1.500" /></Svg>, m: true },
  { i: <Svg w={22} h={22}><path d="M7 4h14l-5 12H2z" stroke={BR} strokeWidth="1.700" /><Eye x={16} y={17} /></Svg> },
  { i: <Svg w={22} h={22}><path d="M11 0L3 22" stroke={BR} strokeWidth="1.800" strokeDasharray="6 3" /><Eye x={15} y={17} /></Svg>, on: true },
  { i: <Svg w={22} h={22}><path d="M2 0l5 5M7 0L2 5M13 3l5 5M18 3l-5 5M0 11l5 5M5 11l-5 5" stroke={BR} strokeWidth="1.600" /><Eye x={14} y={17} /></Svg>, on: true },
  { i: <Svg w={22} h={22}><path d="M8 1v13h12M8 14l-7 6M5.500 4L8 1l2.500 3M18 11.500l2.500 2.500M1 16v4h5" stroke={BR} strokeWidth="1.600" /><Eye x={14} y={17} /></Svg> },
  { i: ic.setup3 },
  { i: <Svg w={22} h={22}><path d="M1 11L7 1h13l-5 10z" fill="#bfe8f5" stroke="#8fa7b0" /><path d="M1 11h14v9H1z" fill="#e3f4f9" stroke="#8e9395" /><path d="M1 11h14v4H1z" fill="#8fd0e8" /><path d="M15 11l5-10v9l-5 10z" fill="#b6cbd3" stroke="#8e9395" /></Svg> },
  { i: <Svg w={22} h={22}><path d="M2 5l8-4h10l-2 15-8 5-7-6z" fill="#c9ebf6" stroke="#6aa9c4" /><path d="M2 5l10 2 8-6M12 7l-2 14M3 15l5-4 10 5" stroke="#5a9fbd" /><path d="M12 7l8-6-2 15-8 5z" fill="#7fbdd6" fillOpacity="0.7" /></Svg> },
  { i: <Svg w={22} h={22}><path d="M2 1v13M19 1v10M3 5h15M6 2.500L3 5l3 2.500M15 2.500L18 5l-3 2.500" stroke="#444" strokeWidth="1.400" /><path d="M11 5v9M8 14h6" stroke={B} strokeWidth="1.600" /><Eye x={15} y={17} /><circle cx="3" cy="18" r="1.700" stroke="#888" /></Svg>, m: true },
  { i: <Svg w={22} h={22}><path d="M1 2h12v9H1z" fill="#fbf3dc" stroke="#a39c82" /><path d="M13 5h6v6M16 8l3 4 3-4" stroke="#444" strokeWidth="1.300" /><Eye x={15} y={17} /></Svg>, on: true },
  { i: <Svg w={22} h={22}><path d="M4 4l5 7-4 7M9 11h8" stroke="#7b8082" strokeWidth="2" /><circle cx="4" cy="4" r="2.800" fill="#4ea14e" /><circle cx="17.500" cy="11" r="2.800" fill="#cf5246" /><circle cx="4.500" cy="18" r="2.800" fill="#2f7fa8" /></Svg> },
];

function GraphicsBar() {
  return (
    <div className="absolute top-[7px] left-[411px] flex h-[42px] w-[750px] items-center border border-[#9fa3a5] bg-[#f8f9fb] pl-[2px]">
      {BAR.map((b, k) => (
        <div key={k} className="flex shrink-0 items-center">
          <div className="flex h-[33px] w-[36px] items-center justify-center px-[2px]">
            <div className={"flex h-[33px] w-[32px] items-center justify-center " + (b.on ? "border border-[#abafb1] bg-[#e1e2e4]" : "")}>{b.i}</div>
          </div>
          {b.m && (
            <Svg w={6} h={4} className="mt-[26px]">
              <path d="M4 0v4H0z" fill="#444" />
            </Svg>
          )}
        </div>
      ))}
    </div>
  );
}

/* ---------- sketch drawing ---------- */

const CY = "#00b8ec";
const DK = "#34005a";
const GR = "#00c000";

const GLYPHS = [
  ["d", 819, 625], ["s", 950.3, 577.3], ["s", 1045.3, 586.3], ["s", 966.3, 607.3], ["s", 1026.3, 613.3],
  ["s", 873.3, 633.3], ["s", 873.3, 656.4], ["s", 994.3, 632.3], ["s", 994.3, 657.4], ["s", 1026.3, 675.4],
  ["s", 966.3, 682.3], ["s", 950.3, 711.3], ["s", 1045.3, 703.3], ["s", 1077.3, 632.3], ["s", 1077.3, 657.3],
  ["s", 815.3, 630.3], ["s", 815.3, 659.3], ["s", 1438.3, 632.3], ["v", 752.4, 644.4], ["v", 1516.4, 644.4],
  ["h", 991.3, 684.4], ["h", 1080.3, 684.4], ["h", 1105.3, 654.4], ["d", 1119.3, 635.3], ["d", 1136.3, 663.3],
  ["t", 817.3, 685.3], ["t", 1016.3, 706.3], ["p", 1434.3, 669.3], ["e", 1438.3, 657], ["h", 1440.3, 654.4],
];

function Glyph({ k, x, y }) {
  return (
    <g transform={`translate(${Math.round(x) - 8} ${Math.round(y) - 8})`}>
      <path d="M2 2h16.500v16.500H2z" fill="#00000022" />
      <path d="M0 0h16v16H0z" fill="#d6f8ca" stroke="#a3b49c" strokeWidth="0.900" />
      <path d="M.5 16V.5H16" stroke="#effceb" />
      {k === "s" && (
        <g stroke="#111" strokeWidth="1.200">
          <path d="M8.500 2v2M8.500 5.500v2M8.500 9.500v2M8.500 13v2M1.500 8.500h4M11.500 8.500h4" />
          <path d="M4.500 6.700l2.300 1.800-2.300 1.800zM12.500 6.700l-2.300 1.800 2.300 1.800z" fill="#111" stroke="none" />
        </g>
      )}
      {k === "v" && <><path d="M1 8.500h14" stroke="#b4cfaa" /><path d="M8.500 1.500v13" stroke="#111" strokeWidth="1.300" /></>}
      {k === "h" && <><path d="M8.500 1v14" stroke="#b4cfaa" /><path d="M1.500 8.500h13" stroke="#111" strokeWidth="1.300" /></>}
      {k === "d" && <path d="M2.500 14L7 9.500M9 7.500L13.500 3" stroke="#111" strokeWidth="1.200" />}
      {k === "t" && (
        <>
          <circle cx="7.500" cy="8" r="5" stroke="#333" strokeWidth="1.300" />
          <path d="M3 15.500L15.500 4" stroke="#333" strokeWidth="1.300" />
          <circle cx="10" cy="10.500" r="2.600" fill="#b8e6ee" stroke="#2b7fa1" strokeWidth="1.300" />
        </>
      )}
      {k === "p" && (
        <>
          <path d="M2 14l12-11" stroke="#222" strokeWidth="1.300" />
          <circle cx="6.500" cy="9.500" r="2.600" fill="#b8e6ee" stroke="#2b7fa1" strokeWidth="1.400" />
        </>
      )}
    </g>
  );
}

/* Arrow head with its tip at (x, y), rotated by a degrees from pointing right. */
const Head = ({ x, y, a, c = GR, l = 11 }) => <path d={`M0 0L${-l} 2.300V-2.300z`} transform={`translate(${x} ${y}) rotate(${a})`} fill={c} />;

const DimText = ({ x, y, w, c = DK, children }) => (
  <text x={x} y={y} textLength={w} lengthAdjust="spacing" fill={c} fontSize="15.500" fontWeight="300" fontFamily="Roboto, Liberation Sans, sans-serif">
    {children}
  </text>
);

const TOP_HALF = "M818.500 645.500C818.500 634 822 625 830 618.300C840 609 850 602 861.700 595C873 588 886 581 900 577.700C911 575.500 923 575 934.500 575.300C950 575.800 966 579 980.700 582.700C989 585 994 587 1000 590.700C1004 594 1007 597 1010.700 601.700C1016 609 1020 615 1026 621C1033 625.500 1040 628.500 1048 629.400H1077.500L1091.700 620L1120 617.300C1160 614 1200 611.200 1272 611.200C1340 611.200 1390 615 1452.500 620";

function Drawing() {
  return (
    <svg width="1572" height="766" viewBox="348 263 1572 766" fill="none" className="block">
      <path d={TOP_HALF + "V645.500z"} fill="#ecc1ea" />
      <path d={TOP_HALF + "V645.500z"} fill="#ecc1ea" transform="matrix(1 0 0 -1 0 1290.800)" />
      <path d="M855.700 552.300C828 578 818.500 608 818.500 645.300S828 713 855.700 739M1011.300 552.300C1030 577 1037.500 610 1037.500 645.300S1030 714 1011.300 739" stroke={CY} strokeWidth="1.100" />

      <path d="M770.500 263V1029" stroke="#f7a823" strokeDasharray="9 3 3 3" />
      <path d="M817.500 263V1029" stroke="#1d8f90" strokeDasharray="8 6" />
      <path d="M1497.500 263V1029" stroke="#b145d9" strokeDasharray="9 3 3 3" />
      <path d="M348 645.500H1920" stroke="#f7a012" />
      <path d="M348 645.500H1497" stroke="#a94fd0" strokeDasharray="5 9 5 5" />
      <path d="M1500 645.500H1920" stroke="#7d7d9a" strokeDasharray="3 12" />

      <path d="M770.500 614.500H1079M1145 614.500H1489M930.500 566v28M930.500 617v28M862.500 608v73M1079.500 599v75M792 664.700l26-6M818.500 665v10" stroke={CY} strokeWidth="1.100" />
      <path d="M1452.500 600v92" stroke="#0a9fb5" strokeWidth="1.200" />
      <g stroke="#ffa000" strokeWidth="1.200">
        <path d={TOP_HALF} />
        <path d={TOP_HALF} transform="matrix(1 0 0 -1 0 1290.800)" />
        <path d="M1452.500 620v50" />
        {[[934.5, 565.5], [1059.5, 574.5], [978.5, 620.5], [978.5, 670.5], [934.5, 724.5], [1059.5, 716.5]].map(([x, y]) => (
          <path key={x + "-" + y} d={`M${x - 9} ${y}h18M${x} ${y - 9}v18`} strokeWidth="1" />
        ))}
        <path d="M857.500 635v21" />
        <path d="M849 645.500h12" strokeWidth="3.500" />
      </g>
      <g fill="#3aa5ae">
        {[[830, 618.3], [980.7, 582.7], [1010.7, 601.7], [1091.7, 620], [830, 672.5], [980.7, 707.7], [1010.7, 688.7], [1091.7, 670.5], [1452.5, 670.5]].map(([x, y]) => (
          <circle key={x + "-" + y} cx={x} cy={y} r="1.400" />
        ))}
      </g>

      <g stroke={DK} strokeWidth="1.100">
        <path d="M818 674.500h51M927 674.500h42M868.500 734l10.500-29M962.700 636.700L1011 742.500M1048 662l10 44M1077.500 594v28M1077.500 670v26M1066 630h8M1339.500 678l2 61.500M1474.500 621v24M1459 620.500h23M1457 670.500h24" />
      </g>
      <path d="M969 673.500h9" stroke={GR} strokeWidth="1.500" />
      <Head x={771} y={614.5} a={180} l={12} />
      <Head x={930.5} y={566} a={-90} />
      <Head x={930.5} y={645} a={90} c={CY} l={12} />
      <Head x={862.5} y={641} a={90} />
      <Head x={862.5} y={647} a={-90} c={CY} />
      <Head x={819} y={674.5} a={180} c={DK} l={12} />
      <Head x={879} y={705} a={-70} />
      <Head x={962.7} y={636.7} a={-114} />
      <Head x={988} y={692} a={-114} />
      <Head x={1048} y={662} a={-103} />
      <Head x={1077.5} y={626} a={90} l={9} />
      <Head x={1077.5} y={663} a={-90} l={10} />
      <Head x={1339.5} y={678} a={-92} l={12} />
      <Head x={1474.5} y={621} a={-90} />
      <Head x={1474.5} y={670} a={90} />
      <Head x={1454} y={614.5} a={180} />
      <Head x={1453} y={621} a={180} l={8} />
      <Head x={1496} y={625.800} a={0} />
      <Head x={1451} y={614.500} a={0} c={CY} />
      <Head x={1452.500} y={622} a={90} c={CY} l={16} />

      <DimText x={911} y={611} w={37} c={CY}>21.27</DimText>
      <DimText x={1089} y={620} w={44} c={CY}>182.72</DimText>
      <DimText x={728} y={671} w={53} c={CY}>R 10.55</DimText>
      <DimText x={847} y={651} w={28} c={CY}>0.27</DimText>
      <DimText x={1437} y={620} w={28} c={CY}>0.11</DimText>
      <DimText x={1434} y={631} w={36} c={CY}>15.00</DimText>
      <DimText x={1456} y={632} w={36} c={CY}>10.82</DimText>
      <DimText x={803} y={651} w={29}>0.00</DimText>
      <DimText x={878} y={681} w={38}>42.95</DimText>
      <DimText x={807} y={740} w={53}>R 40.00</DimText>
      <DimText x={1015} y={749} w={57}>Ø 20.00</DimText>
      <DimText x={1062} y={713} w={53}>R 15.00</DimText>
      <DimText x={1062} y={658} w={29}>8.00</DimText>
      <DimText x={1347} y={746} w={61}>R 500.00</DimText>
      <DimText x={1456} y={663} w={36}>13.50</DimText>

      {GLYPHS.map(([k, x, y], n) => (
        <Glyph key={n} k={k} x={x} y={y} />
      ))}
    </svg>
  );
}

/* ---------- status bar ---------- */

function StatusBar() {
  return (
    <div className="flex h-[51px] w-full items-center border-t border-[#b3bec2] bg-[#f6f9fa]">
      <div className="mt-[15px] ml-[7px] flex h-[30px] w-[30px] items-center justify-center self-start border border-[#abafb1] bg-[#e1e2e4] pl-[5px]">
        <TreeGlyph w={14} h={20} />
      </div>
      <div className="mt-[10px] flex h-[30px] items-center">
        <Svg w={21} h={21} className="ml-[9px]">
          <circle cx="10.500" cy="10.500" r="8.500" fill="#5db4dd" />
          <path d="M5 6c4-4 7 0 5 2s-4 5-6 2zM12 10c3-2 6 0 4 4s-5 1-4-4z" fill="#1f7fb2" />
          <ellipse cx="10.500" cy="10.500" rx="12" ry="6" transform="rotate(-42 10.500 10.500)" stroke="#75797b" strokeWidth="1.300" />
        </Svg>
        <div className="ml-[13px] h-[20px] w-[20px] border border-r-2 border-b-2 border-t-[#3a8fb4] border-r-[#23698a] border-b-[#23698a] border-l-[#3a8fb4] bg-linear-to-b from-white to-[#d0e0e7]" />
        <div className="ml-[15px] h-[30px] w-px bg-[#abafb1]" />
      </div>
      <div className="flex-1" />
      <div className="mb-px flex h-[36px] w-px bg-[#abafb1]" />
      <div className="ml-[48px] h-[36px] w-px bg-[#abafb1]" />
      <div className="mt-[5px] ml-[2px] flex h-[34px] w-[60px] border border-[#d3d6d7] bg-[#fafafa]">
        <div className="flex w-[37px] items-center justify-center">
          <Svg w={20} h={20}>
            <path d="M5 0h3v3h1.500v3h1V3H12V0h4v4l4 9v7h-6v-6h-8v6H0v-7l4-9z" fill="#9a9fa1" />
          </Svg>
        </div>
        <div className="-my-px -mr-px flex w-[23px] items-center justify-center border border-[#b4b7b9] bg-[#e1e2e4]">
          <Arrow color="#a8abad" />
        </div>
      </div>
      <div className="ml-[2px] h-[36px] w-px bg-[#abafb1]" />
      <div className="mt-[6px] mr-[21px] ml-[119px] flex h-[32px] w-[222px] items-center border border-[#abafb1] bg-[#f7f7f7] pl-[10px] text-[14.500px] tracking-[-0.050px] text-[#4a4f52]">
        <span className="flex-1 pt-px">All Sketcher</span>
        <div className="flex h-full w-[24px] items-center justify-center border-l border-[#abafb1]">
          <Arrow />
        </div>
      </div>
    </div>
  );
}

export default function App() {
  return (
    <div className="flex h-[1080px] w-[1920px] flex-col overflow-hidden font-['Open_Sans','Noto_Sans',sans-serif]">
      <Taskbar />
      <TitleBar />
      <Tabs />
      <Ribbon />
      <div className="flex h-[766px]">
        <Sidebar />
        <div className="relative h-[766px] w-[1572px] bg-[#e9eaee]">
          <Drawing />
          <GraphicsBar />
        </div>
      </div>
      <StatusBar />
    </div>
  );
}
